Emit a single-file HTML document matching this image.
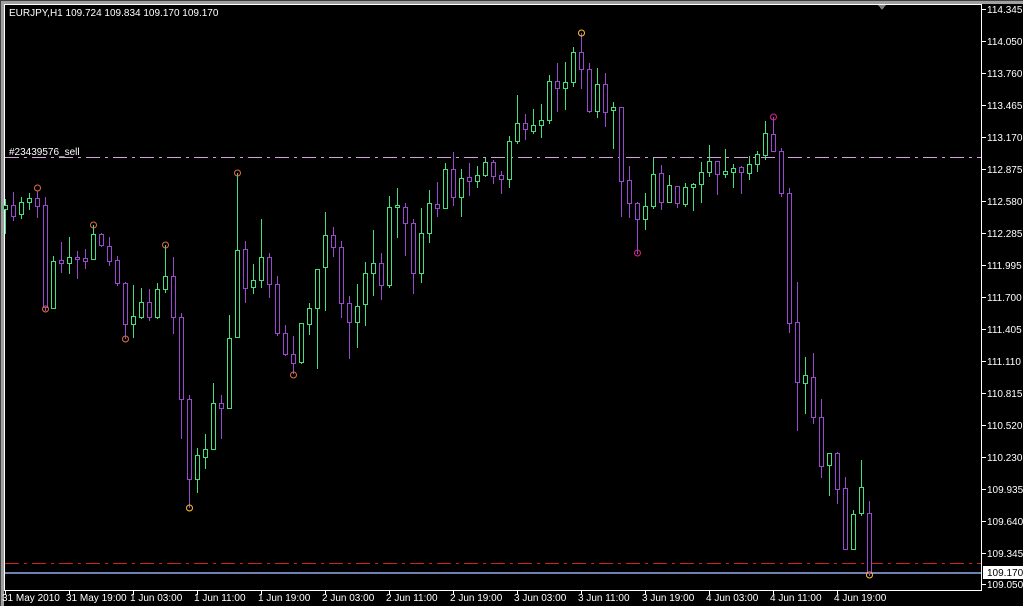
<!DOCTYPE html>
<html><head><meta charset="utf-8"><style>
html,body{margin:0;padding:0;background:#000;width:1023px;height:606px;overflow:hidden}
svg{display:block;shape-rendering:crispEdges}
text{font-family:"Liberation Sans",sans-serif;font-size:10px;fill:#fff}
</style></head><body>
<svg id="s" width="1023" height="606" xmlns="http://www.w3.org/2000/svg" shape-rendering="crispEdges">
<rect x="0" y="0" width="1023" height="606" fill="#000"/>
<rect x="0" y="0" width="1023" height="4" fill="#a0a0a0"/>
<rect x="0" y="0" width="4" height="606" fill="#a0a0a0"/>
<rect x="0" y="0" width="1023" height="1" fill="#404040"/>
<rect x="0" y="0" width="1" height="606" fill="#404040"/>
<rect x="4" y="4" width="1019" height="602" fill="#000"/>
<rect x="4" y="4" width="978" height="1" fill="#fff"/>
<rect x="4" y="590" width="978" height="1" fill="#fff"/>
<rect x="4" y="4" width="1" height="587" fill="#fff"/>
<rect x="981" y="4" width="1" height="587" fill="#fff"/>
<polygon points="878,5 886,5 882,10" fill="#808080"/>
<text x="9" y="16">EURJPY,H1  109.724 109.834 109.170 109.170</text>
<text x="9" y="155">#23439576_sell</text>
<g id="ln"></g>
<rect x="5" y="572" width="976" height="2" fill="#7080b0"/>
<g id="c"></g>
<g id="ax"></g>
<rect x="983" y="566" width="40" height="13" fill="#fff"/>
<text x="987" y="576" style="fill:#000">109.170</text>
</svg>
<script>
function R(x,y,w,h,c){return '<rect x="'+x+'" y="'+y+'" width="'+w+'" height="'+h+'" fill="'+c+'"/>';}
var ln="";
function dash(y,c){for(var x=5;x<981;x+=27){ln+=R(x,y,Math.min(14,981-x),1,c);if(x+19<981)ln+=R(x+19,y,3,1,c);}}
dash(157,"#d8a0e0");dash(563,"#d02020");
document.getElementById("ln").innerHTML=ln;
var d=[[0,0,199,233,205,209],[1,1,192,220,205,216],[2,0,197,218,202,214],[3,0,193,209,198,202],[4,1,191,217,198,206],[5,1,197,310,205,307],[6,0,256,308,261,308],[7,1,242,272,260,263],[8,0,237,273,257,263],[9,1,251,278,257,259],[10,1,249,268,258,261],[11,0,225,259,234,259],[12,1,233,246,234,245],[13,1,237,265,246,261],[14,1,256,285,260,283],[15,1,282,338,283,324],[16,0,285,337,316,324],[17,0,288,318,302,317],[18,1,289,320,302,317],[19,0,283,318,289,317],[20,0,245,292,276,289],[21,1,257,333,276,317],[22,1,313,438,317,399],[23,1,395,507,399,479],[24,0,448,492,455,479],[25,0,434,468,449,457],[26,0,383,449,403,449],[27,1,395,438,403,408],[28,0,315,408,338,408],[29,0,173,337,250,337],[30,1,241,302,249,288],[31,0,264,293,280,287],[32,0,219,287,257,280],[33,1,253,297,257,284],[34,1,276,335,284,333],[35,1,325,355,333,354],[36,1,336,373,354,363],[37,0,323,363,323,362],[38,0,303,334,308,324],[39,0,269,368,269,308],[40,0,212,310,235,267],[41,1,227,256,235,247],[42,1,241,317,247,303],[43,1,296,358,303,322],[44,0,284,347,306,322],[45,0,262,325,273,304],[46,0,230,295,263,273],[47,1,253,299,263,285],[48,0,196,287,207,285],[49,0,188,237,205,207],[50,1,203,255,207,223],[51,1,219,293,223,273],[52,0,208,282,233,273],[53,0,190,242,203,233],[54,1,182,216,204,208],[55,0,163,208,169,208],[56,1,152,205,169,197],[57,0,169,216,178,197],[58,1,163,195,177,181],[59,0,166,187,175,181],[60,0,158,176,162,175],[61,1,160,183,162,176],[62,1,171,193,175,179],[63,0,136,187,141,179],[64,0,95,143,123,141],[65,1,114,139,123,129],[66,0,109,133,125,131],[67,0,104,137,120,125],[68,0,75,123,81,120],[69,1,63,111,81,88],[70,0,62,109,82,88],[71,0,47,86,52,82],[72,1,33,88,52,69],[73,1,63,112,69,111],[74,0,68,117,84,111],[75,1,73,126,84,112],[76,0,102,148,107,110],[77,1,107,216,107,181],[78,1,166,217,180,203],[79,1,202,253,203,219],[80,0,193,229,206,219],[81,0,158,208,174,206],[82,1,165,209,173,202],[83,0,175,202,185,202],[84,1,186,207,186,203],[85,0,183,206,187,204],[86,0,183,210,184,187],[87,0,162,202,172,184],[88,0,145,176,161,172],[89,1,161,194,161,174],[90,0,149,177,171,174],[91,0,164,187,168,172],[92,1,166,193,167,172],[93,0,156,179,164,173],[94,0,151,171,154,164],[95,0,121,159,133,155],[96,1,117,151,134,151],[97,1,148,196,151,193],[98,1,188,332,193,323],[99,1,282,430,322,382],[100,0,357,413,375,383],[101,1,353,423,377,417],[102,1,399,477,417,466],[103,0,453,495,453,465],[104,1,452,503,453,489],[105,1,477,549,488,549],[106,0,510,549,514,549],[107,0,460,515,487,513],[108,1,501,575,513,573]];
var h="";
d.forEach(function(a){var x=5+8*a[0],col=a[1]?"#9a48d0":"#44e080";
h+=R(x,a[2],1,a[3]-a[2]+1,col);
var bh=Math.max(2,a[5]-a[4]+1);
h+=R(x-2,a[4],5,bh,col);
if(bh>2)h+=R(x-1,a[4]+1,3,bh-2,"#000");});
var m=[[4,188,"#e07040"],[5,309,"#e07040"],[11,225,"#e07040"],[15,339,"#e07040"],[20,245,"#e07040"],[23,508,"#ffc030"],[29,173,"#e07040"],[36,375,"#e07040"],[72,33,"#ffc030"],[79,253,"#e0208a"],[96,117,"#e0208a"],[108,575,"#ffc030"]];
m.forEach(function(a){h+='<circle cx="'+(5+8*a[0]+0.5)+'" cy="'+a[1]+'" r="3" fill="none" stroke="'+a[2]+'" shape-rendering="auto"/>';});
document.getElementById("c").innerHTML=h;
var ax="",L=[["114.345",9],["114.050",41],["113.760",73],["113.465",105],["113.170",137],["112.875",169],["112.580",201],["112.285",233],["111.995",265],["111.700",297],["111.405",329],["111.110",361],["110.815",393],["110.520",425],["110.230",457],["109.935",489],["109.640",521],["109.345",553],["109.050",584]];
L.forEach(function(a){ax+=R(982,a[1],4,1,"#fff")+'<text x="987" y="'+(a[1]+4)+'">'+a[0]+'</text>';});
var B=["31 May 2010","31 May 19:00","1 Jun 03:00","1 Jun 11:00","1 Jun 19:00","2 Jun 03:00","2 Jun 11:00","2 Jun 19:00","3 Jun 03:00","3 Jun 11:00","3 Jun 19:00","4 Jun 03:00","4 Jun 11:00","4 Jun 19:00"];
B.forEach(function(t,i){var x=5+64*i;ax+=R(x,591,1,4,"#fff")+'<text x="'+(x-3)+'" y="601">'+t+'</text>';});
document.getElementById("ax").innerHTML=ax;
</script>
</body></html>
